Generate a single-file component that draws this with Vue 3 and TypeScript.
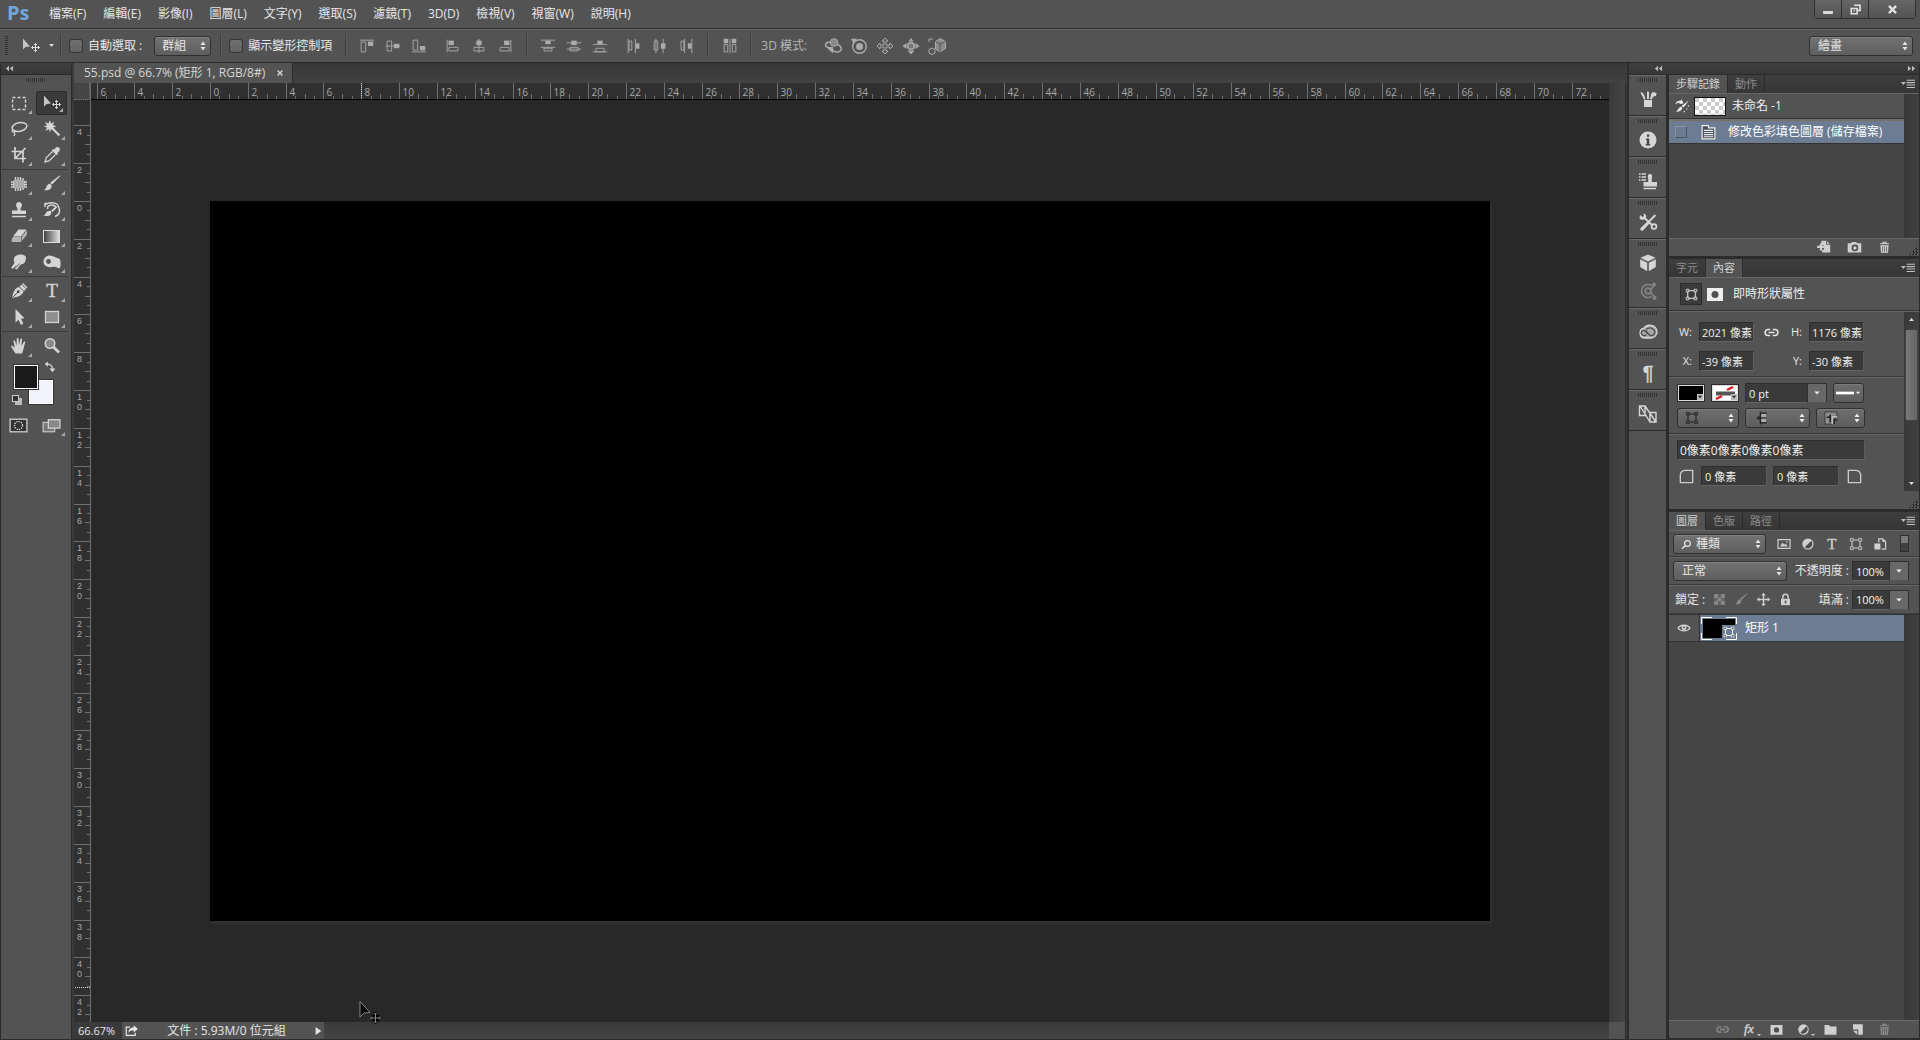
<script setup lang="ts">
import { h, ref } from 'vue'

const glyphs: Record<string, string> = {
  marquee: '<rect x="3.5" y="4.5" width="13" height="12" fill="none" stroke="currentColor" stroke-width="1.4" stroke-dasharray="3 2"/>',
  move: '<path d="M2 2.500V13.500L4.700 10.900 9 10.500z" fill="#c4c4c4"/><path d="M14.500 7.500v8M10.500 11.500h8M13 9l1.500-1.500L16 9M13 14l1.500 1.500L16 14M12 10l-1.500 1.500L12 13M17 10l1.500 1.500L17 13" fill="none" stroke="currentColor"/>',
  lasso: '<ellipse cx="10.500" cy="8" rx="7.500" ry="4.300" transform="rotate(-12 10.500 8)" fill="none" stroke="currentColor" stroke-width="1.500"/><path d="M4 10.500c-2 1.500-.500 3 1 2.500s1-2.500-1-1.500M5 13c1.500 1.500 1 3-.500 4" fill="none" stroke="currentColor" stroke-width="1.200"/>',
  wand: '<path d="M8 1l1 3.500 3.500-1.800-1.800 3.300L14.500 7.500 11 8.500l1.500 3.500-3.500-2-1 3.500-1-3.500-3.500 2 1.500-3.500-3.500-1L5 6.500 3 3l3.500 1.500z"/><path d="M10 9l7.500 7.500" stroke="currentColor" stroke-width="2.200"/>',
  crop: '<path d="M6 2v11.500h11M2.500 6.500H14V17.500M6.500 13L16.500 3" fill="none" stroke="currentColor" stroke-width="1.700"/>',
  dropper: '<path d="M17.200 2.800c1.200 1.200.8 2.700-.2 3.700l-1.600 1.500.7.800-1.600 1.500-4.800-4.800 1.500-1.600.8.800 1.500-1.600c1-1 2.500-1.500 3.700-.3z"/><path d="M10.500 6.500L4 13l-1 4 4-1 6.500-6.500" fill="none" stroke="currentColor" stroke-width="1.300"/>',
  heal: '<rect x="4" y="5.500" width="12" height="9" rx="3" fill="#aaa"/><path d="M6.500 3v3M9 3v3M11.500 3v3M14 4v2M6.500 14v3M9 14v3M11.500 14v3M14 14v2M2 8h3M2 10.500h3M2 13h3M15 8h3M15 10.500h3M15 13h3" stroke="currentColor" stroke-width="1.300"/>',
  brush: '<path d="M18.300 2L10 10.500l-1.800-1.700L17.600 1.600z"/><path d="M9.500 11.300c.700 2.200-.800 4.200-3 4.700-2 .500-3.500.300-5 .200 1.500-.500 2-1 2.500-2.400.700-2.200 2.300-4.300 4-4z"/>',
  stamp: '<path d="M10 2a3 3 0 0 1 2.300 4.900c-.800 1-.8 2-.8 3.600h5.500v3.500H3v-3.500h5.500c0-1.600 0-2.600-.8-3.600A3 3 0 0 1 10 2z"/><path d="M3 16.500h14" stroke="currentColor" stroke-width="1.500"/>',
  history: '<path d="M3 7V3.500h3M3.500 4.500C6 2.500 13 1.500 16 5M6 9c-2-3 3-5 6-3.500s1 4.500-1 3.500M16 6c3 4 1.500 9-3 10.500" fill="none" stroke="currentColor" stroke-width="1.500"/><path d="M18 4l-7.500 8L9 10.500zM8.800 11c1.500 2-.300 5-2.800 5H1.500c2-.5 2-4.500 5-5z"/>',
  eraser: '<path d="M9.500 3.500h8l-5.500 7H4z" fill="#d8d8d8"/><path d="M4 11h8v5H3.500c-1.300 0-1.300-2.500.500-5zM12.700 10.700L18 4.300v4.200l-5.300 6.700z" fill="#b5b5b5"/>',
  smudge: '<path d="M6 4.500C9 1.500 15 2 16.800 4.500c.5 2.500-.3 5.500-2 7-1.300 1-2.500.5-3.500 1.500l-3 4c-1.300 1-2.600 0-2-1.300L7.500 13l-3.300 3.500c-1 .8-2.200-.2-1.500-1.500L5.500 11C4.500 9 4.500 6 6 4.500z"/><path d="M10.500 11.500l-4 4.500" stroke="#666"/>',
  sponge: '<path d="M1.500 9C2 5.500 5 3.500 8 3.500S13.500 6 17 6.500c2 1.500 2 6.500 1 9.500-2 .5-2.500-.5-4.500-1s-4.500.5-7 0-5.500-2.500-5-6z"/><circle cx="6.500" cy="9.500" r="2.400" fill="#555"/>',
  pen: '<path d="M12.500 3.500l4.500 4.500-2 2-4.500-4.500z"/><path d="M10 6l4.500 4.500c-1 3.500-5 5.500-11.500 6.500C4 11 6 7 10 6z"/><path d="M3.500 16.500L9 11" stroke="#444" stroke-width="1"/><circle cx="9.300" cy="10.700" r="1.400" fill="#444"/><path d="M13.500 2.500l4.500 4.500" stroke="currentColor" stroke-width="1.500"/>',
  type: '<text x="10" y="16" text-anchor="middle" font-family="Liberation Serif, serif" font-size="19" stroke="currentColor" stroke-width=".4">T</text>',
  arrow: '<path d="M6.500 2v13.500l3-2.800 2.500 5.300 2.300-1.200L12 11.700l3.500-.500z"/>',
  rect: '<rect x="3.500" y="4.500" width="13" height="11" fill="#8e8e8e" stroke="currentColor" stroke-width="1.300"/>',
  hand: '<path d="M6.500 17.500L2.300 11c-.5-1.200.8-1.700 1.500-.900l2 2L4.500 5.300c-.2-1.300 1.300-1.500 1.600-.300L7.500 9.500 7.800 3c0-1.300 1.700-1.300 1.800 0l.400 6 1.300-5.700c.3-1.200 1.900-.9 1.700.3L12.400 10l2.300-4c.6-1 2-.400 1.500.700-1.300 3.300-1.700 7.800-3.200 10.800z"/>',
  zoom: '<circle cx="8" cy="7.500" r="4.700" fill="#888" stroke="currentColor" stroke-width="1.600"/><path d="M11.500 11l5.500 5.500" stroke="currentColor" stroke-width="2.800"/>',
  mask: '<rect x="2" y="4" width="16" height="12" fill="#333" stroke="currentColor" stroke-width="1.200"/><circle cx="10" cy="10" r="3.800" fill="none" stroke="#fff" stroke-width="1.200" stroke-dasharray="1 1.200"/>',
  screen: '<rect x="2" y="7" width="11" height="9" fill="#777" stroke="currentColor"/><rect x="7" y="4.500" width="11" height="8" fill="#888" stroke="currentColor" stroke-width="1.200"/>',
  swap: '<path d="M5 3.500C10 3.500 14 6 14 12" fill="none" stroke="currentColor" stroke-width="2.200"/><path d="M6.500 -1v9L1 3.500zM9 11h10L14 17z"/>',
  alignTop: '<path d="M2 3.500h16M3.500 5.500h5v11h-5z" fill="none" stroke="currentColor"/><path d="M11 5h6v5h-6z"/>',
  alignMid: '<path d="M2 10h16M3.500 4.500h5v11h-5z" fill="none" stroke="currentColor"/><path d="M11 7.500h6v5h-6z"/>',
  alignBot: '<path d="M2 16.500h16M3.500 3.500h5v11h-5z" fill="none" stroke="currentColor"/><path d="M11 10h6v5h-6z"/>',
  alignLeft: '<path d="M3.500 3v14M5.500 11.500h10v4h-10z" fill="none" stroke="currentColor"/><path d="M5 4h6v5H5z"/>',
  alignCenter: '<path d="M10 2v16M4.500 11.500h11v4h-11z" fill="none" stroke="currentColor"/><path d="M7 4h6v5H7z"/>',
  alignRight: '<path d="M16.500 3v14M4.500 11.500h10v4h-10z" fill="none" stroke="currentColor"/><path d="M9 4h6v5H9z"/>',
  distTop: '<path d="M2 3.500h16M2 11.500h16M5.500 12.500h9v3h-9z" fill="none" stroke="currentColor"/><path d="M7 4h6v4H7z"/>',
  distMid: '<path d="M2 6.500h16M2 13.500h16M5.500 11.500h9v4h-9z" fill="none" stroke="currentColor"/><path d="M7 4h6v5H7z"/>',
  distBot: '<path d="M2 8.500h16M2 16.500h16M5.500 12.500h9v4h-9z" fill="none" stroke="currentColor"/><path d="M7 4h6v4H7z"/>',
  distLeft: '<path d="M3.500 2v16M11.500 2v16M4.500 4.500h3v10h-3z" fill="none" stroke="currentColor"/><path d="M12 7h4v6h-4z"/>',
  distCenter: '<path d="M5.500 2v16M13.500 2v16M3.500 4.500h4v10h-4z" fill="none" stroke="currentColor"/><path d="M11 7h5v6h-5z"/>',
  distRight: '<path d="M8.500 2v16M16.500 2v16M4.500 4.500h3v10h-3z" fill="none" stroke="currentColor"/><path d="M12 7h4v6h-4z"/>',
  autoAlign: '<path d="M10 2v16M3.500 8.500h4v8h-4zM12.500 8.500h4v8h-4z" fill="none" stroke="currentColor"/><path d="M3 2h5v5H3zM12 2h5v5h-5z"/>',
  orbit: '<circle cx="11" cy="6.500" r="3.800" fill="#8a8a8a" stroke="currentColor"/><path d="M7 6C1.500 6.500 1 11 6 11.500M14.500 8.500c5 2 5 7 0 7.500-2 .2-3.500-.500-5-2" fill="none" stroke="currentColor" stroke-width="1.500"/><path d="M3 11l7 0 0 6.500z"/>',
  roll: '<circle cx="10.500" cy="10.500" r="6.800" fill="none" stroke="currentColor" stroke-width="1.400"/><circle cx="10.500" cy="10.500" r="3.500"/><path d="M2 3l6-.5-3.500 5z"/>',
  pan: '<path d="M10 2l3 3h-2v4h4V7l3 3-3 3v-2h-4v4h2l-3 3-3-3h2v-4H5v2l-3-3 3-3v2h4V5H7z" fill="none" stroke="currentColor"/>',
  slide: '<circle cx="10" cy="10" r="3.300" fill="#777" stroke="currentColor" stroke-width="1.600"/><path d="M10 2l2.500 3.500h-5zM10 18.500l3.500-4h-7zM1.500 10l4-3v6zM18.500 10l-4-3v6z"/>',
  scale3d: '<path d="M13 2.500l5.500 3v7L13 16l-4.500-3V5.500z" fill="#8b8b8b" stroke="currentColor"/><path d="M8.500 5.500L13 8l5.500-2.500M13 8v8" fill="none" stroke="#555"/><path d="M2 3h4M2 3v3M5 12l3 1.500V17l-3 1.500L2 17v-3.500z" fill="#555" stroke="currentColor"/>',
  brushes: '<path d="M6 11h8v7H6zM9 2.500l2 .5v7H9zM2.500 3c3 .5 4 3 5 7.500H6C5 7.500 3 6 2.500 3zM12 10c.5-2 1-3.500 1-4.500l1.500-2.500 4 1-.500 3-2.500.5-2 3z"/>',
  info: '<circle cx="10" cy="10" r="8.500"/><path d="M8.200 8.500h3V14h1v1.500H7.800V14h1V10h-.800zM9 4.500h2.300v2.300H9z" fill="#444"/>',
  clone: '<path d="M12 3a2.200 2.200 0 0 1 1.800 3.500V11H19v4.500H5.500V11h4.700V6.500A2.200 2.200 0 0 1 12 3z"/><path d="M5.500 17.500H18M1 3h1.500M3.500 3H8M1 6h1.500M3.500 6H8M1 9h1.500M3.500 9H8" stroke="currentColor" stroke-width="1.400"/>',
  tools: '<path d="M17.500 3L9.500 11M6 5.500l8.500 8" stroke="currentColor" stroke-width="1.800"/><path d="M9.500 9.500l2 2-6.500 7c-1.500 1-3.500-.5-2.500-2.500zM2 3l2.500 2 1.500-1L5.500 1.500C8 2 9 4.500 7.500 6.500S3 8 1.500 6.500z"/><circle cx="16" cy="14.500" r="2.400" fill="none" stroke="currentColor" stroke-width="1.800"/>',
  cube: '<path d="M10 1.500l7.500 3.300L10 8.500 2.500 4.800zM2.200 6.300l7 3.500v8.500l-7-4.300zM17.800 6.300l-7 3.500v8.500l7-4.300z"/>',
  share3d: '<path d="M13.500 4.500a6.500 6.500 0 1 0 0 11" fill="none" stroke="currentColor" stroke-width="1.700"/><circle cx="10" cy="10" r="2.800" fill="none" stroke="currentColor" stroke-width="1.800"/><path d="M12.500 9l3.500-5M12.500 11l4 5" fill="none" stroke="currentColor" stroke-width="1.500"/><circle cx="16" cy="3.500" r="2"/><circle cx="16.500" cy="17" r="2"/>',
  cloud: '<path d="M13.500 3.500a6.300 6.300 0 0 1 0 12.500H6.500a5 5 0 0 1-.700-9.800A7.500 7.500 0 0 1 13.500 3.500z" fill="#a8a8a8" stroke="currentColor" stroke-width="1.300"/><path d="M11.500 13L7 9c-3-2-5 2-2.500 4 1.500 1 3 .5 4-.500M8 7.500C11 5 14 5.500 16 8s0 6-3.500 5.500C10.500 13 9.500 10 7.500 8.500" fill="none" stroke="#4c4c4c" stroke-width="1.300"/>',
  para: '<text x="10" y="17" text-anchor="middle" font-family="Liberation Sans, sans-serif" font-size="20" stroke="currentColor" stroke-width=".5">¶</text>',
  comps: '<path d="M1.500 2h5.500v9.500H1.500zM12 8.500h6v9.500h-6zM2 2l10 16M7 2l11 16" fill="none" stroke="currentColor" stroke-width="1.400"/>',
  newDoc: '<path d="M9 3h5l4 4v9H9v-3h2V8H8V4zM3.500 8.500h3V6H9v2.500h2.500V11H9v2.800H6.500V11h-3z"/><path d="M14 3v4h4" stroke="#555" fill="none"/>',
  camera: '<path d="M2 5h4l1-1.500h5L13 5h5v11H2z"/><circle cx="10.500" cy="10.500" r="3" fill="none" stroke="#4a4a4a" stroke-width="1.800"/>',
  trash: '<path d="M4 5h12M8 4.500V3h4v1.500" fill="none" stroke="currentColor" stroke-width="1.500"/><path d="M4.500 7h11l-.800 10H5.300z"/><path d="M7.300 8.500v7M10 8.500v7M12.700 8.500v7" stroke="#555"/>',
  shape: '<path d="M5 5h10v10H5z" fill="none" stroke="currentColor" stroke-width="1.300"/><path d="M3 3h3.500v3.500H3zM13.500 3H17v3.500h-3.500zM3 13.500h3.500V17H3zM13.500 13.500H17V17h-3.500z" fill="#555" stroke="currentColor"/>',
  maskAdd: '<path d="M2 4h16v13H2z"/><circle cx="10" cy="10.500" r="3.500" fill="#505050"/>',
  link: '<path d="M8.500 6.500H6a3.500 3.500 0 0 0 0 7h2.500M11.500 6.500H14a3.500 3.500 0 0 1 0 7h-2.500M6.500 10h7" fill="none" stroke="currentColor" stroke-width="1.800"/>',
  cornerL: '<path d="M3.500 16.500V8Q4 4 8 3.500h8.500v13z" fill="none" stroke="currentColor" stroke-width="1.400"/>',
  cornerR: '<path d="M16.500 16.500V8Q16 4 12 3.500H3.500v13z" fill="none" stroke="currentColor" stroke-width="1.400"/>',
  capAlign: '<path d="M8 2v16M8 4h8M8 16h8M8 10h7" fill="none" stroke="#222" stroke-width="1.600"/><path d="M9 5h6v4H9zM9 11h6v4H9z" fill="#aaa"/><path d="M3 10l4-3v6z" fill="#222"/>',
  joinAlign: '<path d="M2.500 2.500h15V8h-6v9.500h-9z" fill="#8f8f8f" stroke="#333"/><path d="M11.500 8.500h6M11.500 8v9.500" stroke="#eee" stroke-width="1.300"/><path d="M4.500 9h5M9 5.500v10" stroke="#222" stroke-width="2"/><path d="M14 17.500v-5h4" stroke="#222" fill="none" stroke-width="1.600"/>',
  search: '<circle cx="11.500" cy="8.500" r="4.500" fill="none" stroke="currentColor" stroke-width="1.800"/><path d="M8 12l-5 4.500" stroke="currentColor" stroke-width="2.200"/>',
  picture: '<path d="M2.500 4.500h15v11h-15z" fill="none" stroke="currentColor" stroke-width="1.500"/><path d="M5 13l3-5 2.500 3 1.500-1.500 3 3.500z"/><circle cx="13.500" cy="7.500" r="1"/>',
  adjust: '<circle cx="10" cy="10" r="7"/><path d="M14.200 5.800A6 6 0 0 1 5.800 14.200z" fill="#4e4e4e"/>',
  smart: '<path d="M8.500 8V3.500h5L17 7v9.500h-5" fill="none" stroke="currentColor" stroke-width="1.500"/><path d="M13 3.500V7.500h4M3 9.500h7.500V17H3z"/>',
  checker: '<path d="M3 3h14v14H3z" fill="#666"/><path d="M3 3h5v5H3zM12 3h5v5h-5zM8 8h4v4H8zM3 12h5v5H3zM12 12h5v5h-5z" fill="#8a8a8a"/>',
  moveAll: '<path d="M10 1l3 3.500h-2v4.500h4.500V7L19 10l-3.500 3v-2H11v4.500h2L10 19l-3-3.500h2V11H4.500v2L1 10l3.500-3v2H9V4.500H7z"/>',
  lock: '<path d="M4 9h12v8.500H4z"/><path d="M6.500 9V6.500a3.500 3.500 0 0 1 7 0V9" fill="none" stroke="currentColor" stroke-width="2"/><path d="M10 11.500v3.500" stroke="#444" stroke-width="2"/>',
  eye: '<path d="M1.500 10C5 4.500 15 4.500 18.500 10 15 15.500 5 15.500 1.500 10z" fill="none" stroke="currentColor" stroke-width="1.700"/><circle cx="10" cy="9.500" r="3.500"/><circle cx="10" cy="9" r="1.300" fill="#444"/>',
  fx: '<text x="9" y="15" text-anchor="middle" font-family="Liberation Serif, serif" font-style="italic" font-size="18" stroke="currentColor" stroke-width=".6">fx</text>',
  folder: '<path d="M2 4h6l1.500 2H18v11H2z"/>',
  newLayer: '<path d="M4 3h13v14h-6v-7H4z"/><path d="M4 11.500h5.500V17z"/>',
  historyDoc: '<path d="M1.500 8c1-3.500 4-5 6.500-4.500L9.500 2 12 7 6.500 7.500 7.500 6C5.500 6 4 6.500 1.500 8zM18.500 3L12 12l-2.500-2zM9.500 11c2 2.500-1 6-7 6.500 2.500-1.500 3-6.500 7-6.500z"/><path d="M18 9v2M16 13v2M12 17h3" stroke="currentColor" stroke-width="1.500" stroke-dasharray="1.500 1.500"/>',
  page: '<path d="M2.500 5V2H10v2.500h7.500v13h-15z" fill="#454f5c" stroke="currentColor" stroke-width="1.400"/><path d="M4.500 7.500h11M4.500 10h11M4.500 12.500h11M4.500 15h11" stroke="currentColor" stroke-width="1.200"/>',
  export: '<path d="M8 5.500H3v11h12V13" fill="none" stroke="currentColor" stroke-width="1.600"/><path d="M6 13c0-5 3-7 7-7V3l5.500 5L13 12.500v-3c-3 0-5 .8-7 3.500z"/>',
  minimize: '<path d="M3 13h14v4H3z"/>',
  restore: '<path d="M8 3.500h9v8h-4M3.500 8.500h9v8h-9zM7 12h2" fill="none" stroke="currentColor" stroke-width="2.500"/>',
  close: '<path d="M4.500 4.500l11 11M15.500 4.500l-11 11" stroke="currentColor" stroke-width="3.500"/>',
  closeTab: '<path d="M4 4l12 12M16 4L4 16" stroke="currentColor" stroke-width="3.500"/>',
  panelMenu: '<path d="M0 7h7L3.500 11.500z"/><path d="M8 4.500h12M8 8h12M8 11.500h12M8 15h12" stroke="currentColor" stroke-width="1.500"/>',
  collapse: '<path d="M9 4v12L2 10zM18 4v12L11 10z"/>',
  expand: '<path d="M2 4v12l7-6zM11 4v12l7-6z"/>',
  updown: '<path d="M10 1l5 7H5zM10 19l5-7H5z"/>',
  down: '<path d="M3 6h14l-7 8z"/>',
  play: '<path d="M4 0l14 10-14 10z"/>',
  up: '<path d="M3 14h14l-7-8z"/>',
  line: '<path d="M0 10h20" stroke="currentColor" stroke-width="3"/>',
}

const Icon = (props: { name: string; size?: number }) =>
  h('svg', {
    viewBox: '0 0 20 20',
    width: props.size ?? 20,
    height: props.size ?? 20,
    fill: 'currentColor',
    'aria-hidden': 'true',
    innerHTML: glyphs[props.name],
  })
Icon.props = ['name', 'size']

const menus = ['檔案(F)', '編輯(E)', '影像(I)', '圖層(L)', '文字(Y)', '選取(S)', '濾鏡(T)', '3D(D)', '檢視(V)', '視窗(W)', '說明(H)']
const alignGroups = [
  [['alignTop', 'alignMid', 'alignBot'], ['alignLeft', 'alignCenter', 'alignRight']],
  [['distTop', 'distMid', 'distBot'], ['distLeft', 'distCenter', 'distRight']],
  [['autoAlign']],
]
const modes3d = ['orbit', 'roll', 'pan', 'slide', 'scale3d']
const toolGroups = [
  ['marquee', 'move', 'lasso', 'wand', 'crop', 'dropper'],
  ['heal', 'brush', 'stamp', 'history', 'eraser', 'gradient', 'smudge', 'sponge'],
  ['pen', 'type', 'arrow', 'rect'],
  ['hand', 'zoom'],
]
const dock = [['brushes'], ['info'], ['clone'], ['tools'], ['cube', 'share3d'], ['cloud'], ['para'], ['comps']]

// Ruler ticks: one labelled division covers two units.
const DIV = 37.82
const tickSet = (first: number, last: number, origin: number, lastLabel: number) => {
  const out: { pos: number; kind: number; label: string }[] = []
  for (let q = first * 4; q <= last * 4; q++) {
    const kind = q % 4 === 0 ? 0 : q % 2 === 0 ? 1 : 2
    const label = kind === 0 && q / 4 <= lastLabel ? String(Math.abs(q / 2)) : ''
    out.push({ pos: Math.round(origin + (q * DIV) / 4) + 0.5, kind, label })
  }
  return out
}
const hTicks = tickSet(-3, 37, 119, 36)
const vTicks = tickSet(-2, 21.5, 101, 21)

const autoSelect = ref(false)
const showTransform = ref(false)
const filterIcons = ['picture', 'adjust', 'type', 'shape', 'smart']
const lockIcons = ['checker', 'brush', 'moveAll', 'lock']
const layerActions = ['link', 'fx', 'maskAdd', 'adjust', 'folder', 'newLayer', 'trash']
</script>

<template>
  <div class="app">
    <header class="menubar">
      <span class="logo">Ps</span>
      <nav class="menus"><a v-for="m in menus" :key="m" href="#">{{ m }}</a></nav>
      <div class="winbtns">
        <button aria-label="最小化"><Icon name="minimize" :size="14" /></button>
        <button aria-label="還原"><Icon name="restore" :size="13" /></button>
        <button class="wide" aria-label="關閉"><Icon name="close" :size="13" /></button>
      </div>
    </header>

    <div class="options">
      <i class="vgrip"></i>
      <button class="current" aria-label="移動工具"><Icon name="move" :size="20" /><Icon name="down" :size="7" /></button>
      <i class="vsep"></i>
      <label class="check"><input v-model="autoSelect" type="checkbox" />自動選取 :</label>
      <span class="sel group"><select aria-label="自動選取"><option>群組</option></select><Icon name="updown" :size="10" /></span>
      <i class="vsep"></i>
      <label class="check transform"><input v-model="showTransform" type="checkbox" />顯示變形控制項</label>
      <template v-for="(g, gi) in alignGroups" :key="gi">
        <i class="vsep"></i>
        <div class="aligns" :class="{ single: g.length === 1 }">
          <div v-for="(s, si) in g" :key="si" class="alignset">
            <button v-for="n in s" :key="n" :aria-label="n"><Icon :name="n" :size="18" /></button>
          </div>
        </div>
      </template>
      <i class="vsep"></i>
      <span class="mode3d">3D 模式:</span>
      <div class="alignset"><button v-for="n in modes3d" :key="n" :aria-label="n"><Icon :name="n" :size="20" /></button></div>
      <span class="sel workspace"><select aria-label="工作區"><option>繪畫</option></select><Icon name="updown" :size="10" /></span>
    </div>

    <div class="body">
      <aside class="toolbox">
        <div class="strip"><Icon name="collapse" :size="9" /></div>
        <i class="hgrip"></i>
        <div v-for="(g, gi) in toolGroups" :key="gi" class="tools">
          <button v-for="t in g" :key="t" :class="{ on: t === 'move', flyout: t !== 'zoom' }" :aria-label="t">
            <span v-if="t === 'gradient'" class="gradicon"></span>
            <Icon v-else :name="t" :size="20" />
          </button>
        </div>
        <div class="swatches">
          <button class="bg" aria-label="背景色"></button>
          <button class="fg" aria-label="前景色"></button>
          <span class="swap"><Icon name="swap" :size="12" /></span>
          <span class="reset"></span>
        </div>
        <div class="tools last">
          <button aria-label="快速遮罩"><Icon name="mask" :size="21" /></button>
          <button class="flyout" aria-label="螢幕模式"><Icon name="screen" :size="21" /></button>
        </div>
      </aside>

      <main class="doc">
        <div class="tabs">
          <div class="doctab">55.psd @ 66.7% (矩形 1, RGB/8#)<button aria-label="關閉文件"><Icon name="closeTab" :size="8" /></button></div>
        </div>
        <div class="work">
          <div class="side">
            <i class="corner"></i>
            <svg class="vruler">
              <g v-for="t in vTicks" :key="t.pos">
                <line :x1="[0, 11, 13][t.kind]" x2="16" :y1="t.pos" :y2="t.pos" />
                <text v-for="(c, i) in t.label.split('')" :key="i" x="3" :y="t.pos + 9.5 + i * 10">{{ c }}</text>
              </g>
              <line class="mark" x1="1" x2="16" y1="887.5" y2="887.5" />
            </svg>
          </div>
          <div class="center">
            <svg class="hruler">
              <g v-for="t in hTicks" :key="t.pos">
                <line :y1="[0, 11, 13][t.kind]" y2="16" :x1="t.pos" :x2="t.pos" />
                <text v-if="t.label" :x="t.pos + 3" y="13">{{ t.label }}</text>
              </g>
              <line class="mark" y1="0" y2="16" x1="270.5" x2="270.5" />
            </svg>
            <div class="canvas">
              <div class="artboard"></div>
              <svg class="cursor" viewBox="0 0 24 24" width="24" height="24">
                <path d="M1 0.500V16L5 12 11 11.500z" fill="#000" stroke="#888" />
                <path d="M16.500 10.500l6 6.500-6 6.500-6-6.500z" fill="#000" />
                <path d="M16.500 12v10M11.500 17h10M15 13.500l1.500-1.500 1.500 1.500M15 20.500l1.500 1.500 1.500-1.500M13 15.500L11.500 17l1.500 1.500M20 15.500l1.500 1.500-1.500 1.500" fill="none" stroke="#8a8a8a" />
              </svg>
            </div>
          </div>
          <i class="vscroll"></i>
        </div>
        <footer class="status">
          <input class="pct" aria-label="縮放" value="66.67%" />
          <div class="info">
            <Icon name="export" :size="15" /><span>文件 : 5.93M/0 位元組</span><Icon name="play" :size="8" />
          </div>
          <i class="hscroll"></i>
          <i class="box"></i>
        </footer>
      </main>

      <aside class="right">
        <div class="strip"><Icon name="collapse" :size="9" /><Icon name="expand" :size="9" /></div>
        <div class="cols">
          <nav class="dock">
            <div v-for="(d, i) in dock" :key="i" class="cell">
              <i class="hgrip"></i>
              <button v-for="n in d" :key="n" :class="{ dim: n === 'share3d' }" :aria-label="n"><Icon :name="n" :size="20" /></button>
            </div>
          </nav>
          <div class="panels">
            <section class="panel history">
              <div class="ptabs"><button class="on">步驟記錄</button><button>動作</button><span class="pmenu"><Icon name="panelMenu" :size="14" /></span></div>
              <div class="withbar">
                <div class="list">
                  <div class="snap"><Icon name="historyDoc" :size="16" /><span class="thumb"></span><span>未命名 -1</span></div>
                  <div class="step"><span class="slot"></span><Icon name="page" :size="17" /><span>修改色彩填色圖層 (儲存檔案)</span></div>
                </div>
                <i class="bar"></i>
              </div>
              <div class="pfoot hist">
                <button aria-label="新文件"><Icon name="newDoc" :size="18" /></button>
                <button aria-label="快照"><Icon name="camera" :size="17" /></button>
                <button aria-label="刪除"><Icon name="trash" :size="15" /></button>
                <i class="resize"></i>
              </div>
            </section>

            <section class="panel props">
              <div class="ptabs"><button>字元</button><button class="on">內容</button><span class="pmenu"><Icon name="panelMenu" :size="14" /></span></div>
              <div class="phead">
                <span class="shapebtn"><Icon name="shape" :size="15" /></span><Icon name="maskAdd" :size="20" /><span>即時形狀屬性</span>
              </div>
              <div class="withbar">
                <div class="fields">
                  <div class="dims">
                    <label for="w">W:</label><input id="w" value="2021 像素" />
                    <Icon name="link" :size="17" />
                    <label for="h">H:</label><input id="h" value="1176 像素" />
                    <label for="x">X:</label><input id="x" value="-39 像素" />
                    <span></span>
                    <label for="y">Y:</label><input id="y" value="-30 像素" />
                  </div>
                  <div class="strokes">
                    <div class="row">
                      <button class="chip fill" aria-label="填色"><Icon name="down" :size="6" /></button>
                      <button class="chip none" aria-label="筆畫"><svg width="20" height="14" viewBox="0 0 20 14" aria-hidden="true"><path d="M1 7.500h19" stroke="#555" stroke-width="4" /><path d="M1 13l6-3M12 4l6-3" stroke="#d22" stroke-width="2.500" /></svg><Icon name="down" :size="6" /></button>
                      <span class="combo pt"><input aria-label="筆畫寬度" value="0 pt" /><button aria-label="寬度選單"><Icon name="down" :size="8" /></button></span>
                      <button class="drop linebtn" aria-label="筆畫樣式"><Icon name="line" :size="18" /><Icon name="down" :size="6" /></button>
                    </div>
                    <div class="row">
                      <button class="drop d1" aria-label="對齊"><Icon name="shape" :size="16" /><Icon name="updown" :size="10" /></button>
                      <button class="drop d2" aria-label="端點"><Icon name="capAlign" :size="16" /><Icon name="updown" :size="10" /></button>
                      <button class="drop d3" aria-label="轉角"><Icon name="joinAlign" :size="16" /><Icon name="updown" :size="10" /></button>
                    </div>
                  </div>
                  <div class="radii">
                    <input class="all" aria-label="圓角半徑" value="0像素0像素0像素0像素" />
                    <div class="row">
                      <Icon name="cornerL" :size="19" /><input aria-label="左上角" value="0 像素" /><input aria-label="右上角" value="0 像素" /><Icon name="cornerR" :size="19" />
                    </div>
                  </div>
                </div>
                <div class="bar scroll"><Icon name="up" :size="7" /><i class="thumbbar"></i><Icon name="down" :size="7" /></div>
              </div>
              <div class="pfoot"><i class="resize"></i></div>
            </section>

            <section class="panel layers">
              <div class="ptabs"><button class="on">圖層</button><button>色版</button><button>路徑</button><span class="pmenu"><Icon name="panelMenu" :size="14" /></span></div>
              <div class="lrow filter">
                <span class="sel kind"><span class="lens"><Icon name="search" :size="13" /></span><select aria-label="篩選"><option>種類</option></select><Icon name="updown" :size="10" /></span>
                <div class="ficons"><button v-for="n in filterIcons" :key="n" :aria-label="n"><Icon :name="n" :size="16" /></button></div>
                <i class="toggle"></i>
              </div>
              <div class="lrow">
                <span class="sel blend"><select aria-label="混合模式"><option>正常</option></select><Icon name="updown" :size="10" /></span>
                <label class="push" for="op">不透明度 :</label>
                <span class="combo"><input id="op" value="100%" /><button aria-label="不透明度選單"><Icon name="down" :size="8" /></button></span>
              </div>
              <div class="lrow locks">
                <span>鎖定 :</span>
                <div class="licons"><button v-for="n in lockIcons" :key="n" :class="n" :aria-label="n"><Icon :name="n" :size="15" /></button></div>
                <label class="push" for="fl">填滿 :</label>
                <span class="combo"><input id="fl" value="100%" /><button aria-label="填滿選單"><Icon name="down" :size="8" /></button></span>
              </div>
              <div class="withbar">
                <div class="list">
                  <div class="layer">
                    <button class="vis" aria-label="可見度"><Icon name="eye" :size="14" /></button>
                    <div class="lbody">
                      <span class="lthumb">
                        <svg viewBox="0 0 36 23" width="36" height="23" aria-hidden="true">
                          <path d="M2 2h32v19H2z" fill="#000" />
                          <path d="M.5 7V.5H11M25 .5h10.500V7M.5 16v6.500H11M25 22.500h10.500V16" fill="none" stroke="#fff" />
                        </svg>
                        <b><Icon name="shape" :size="14" /></b>
                      </span>
                      <span>矩形 1</span>
                    </div>
                  </div>
                </div>
                <i class="bar"></i>
              </div>
              <div class="pfoot lay">
                <button v-for="n in layerActions" :key="n" :class="n" :aria-label="n"><Icon :name="n" :size="15" /></button>
              </div>
            </section>
          </div>
        </div>
      </aside>
    </div>
  </div>
</template>

<style>
html, body { margin: 0; background: #282828; }
</style>

<style scoped>
* { box-sizing: border-box; }
svg { display: block; flex: none; }
i { display: block; flex: none; }
.app {
  height: 100vh; min-height: 700px; display: flex; flex-direction: column; overflow: hidden;
  background: #535353; color: #e6e6e6;
  font: 12px/16px "Open Sans", "Noto Sans CJK TC", sans-serif;
}
button, input, select { font: inherit; color: inherit; margin: 0; padding: 0; border: 0; background: none; border-radius: 0; }
button { display: flex; align-items: center; justify-content: center; flex: none; }
input { min-width: 0; outline: none; }
label, span { white-space: nowrap; }

.menubar { display: flex; height: 28px; flex: none; align-items: flex-start; padding-left: 7px; }
.logo { width: 42px; color: #74a5da; font: bold 20px/26px "Open Sans", sans-serif; }
.menus { display: flex; gap: 17px; line-height: 27px; }
.menus a { color: inherit; text-decoration: none; white-space: nowrap; }
.winbtns { display: flex; margin: 0 4px 0 auto; height: 19px; border: 1px solid #303030; border-top: 0; border-radius: 0 0 4px 4px; }
.winbtns button { width: 27px; border-right: 1px solid #303030; color: #e2e2e2; background: linear-gradient(#666, #545454); }
.winbtns .wide { width: 46px; border-right: 0; }

.options { display: flex; flex: none; align-items: center; height: 35px; border-top: 1px solid #2b2b2b; border-bottom: 1px solid #2b2b2b; box-shadow: inset 0 1px #676767; padding: 0 7px 0 5px; }
.vgrip { width: 3px; height: 20px; background: repeating-linear-gradient(#333 0 1px, transparent 1px 2px); }
.current { gap: 7px; margin: 0 5px 0 13px; color: #dcdcdc; }
.vsep { width: 2px; height: 23px; background: #3f3f3f; border-right: 1px solid #5c5c5c; }
.check { display: flex; align-items: center; gap: 5px; margin-left: 7px; }
.check input { appearance: none; width: 14px; height: 14px; border: 1px solid #343434; border-radius: 3px; background: linear-gradient(#707070, #626262); }
.transform { margin-right: 13px; }
.sel { position: relative; display: flex; height: 20px; flex: none; border: 1px solid #303030; border-radius: 3px; background: linear-gradient(#727272, #5e5e5e); box-shadow: inset 0 1px #838383; }
.sel select { appearance: none; flex: 1; width: 100%; padding: 0 16px 0 8px; line-height: 16px; outline: none; }
.sel > svg { position: absolute; right: 2px; top: 4px; color: #e4e4e4; pointer-events: none; }
.group { width: 57px; margin: 0 9px 0 12px; }
.group select { padding-left: 7px; }
.workspace { width: 104px; margin-left: auto; }
.aligns { display: flex; gap: 8px; padding: 0 8px 0 7px; }
.alignset { display: flex; color: #ababab; }
.alignset button { width: 26px; height: 20px; }
.single { padding: 0 7px 0 8px; }
.mode3d { margin: 0 13px 0 9px; color: #b4b4b4; }

.body { flex: 1; min-height: 0; display: flex; padding: 0 1px 1px; background: #2b2b2b; }
.strip { flex: none; height: 12px; display: flex; align-items: center; background: linear-gradient(#404040, #373737); color: #bdbdbd; border-bottom: 1px solid #2b2b2b; }
.toolbox { width: 71px; flex: none; display: flex; flex-direction: column; background: #535353; border-right: 1px solid #2b2b2b; }
.toolbox .strip { padding-left: 4px; }
.hgrip { width: 19px; height: 4px; background: repeating-linear-gradient(90deg, #343434 0 1px, transparent 1px 2px); }
.toolbox .hgrip { margin: 3px 0 7px 25px; }
.tools { display: grid; grid-template-columns: 33px 33px; grid-auto-rows: 26px; margin: 0 3px 0 1px; padding: 1px 0; color: #d4d4d4; }
.tools + .tools { border-top: 1px solid #3c3c3c; }
.tools button { position: relative; }
.tools .flyout::after { content: ""; position: absolute; right: 3px; bottom: 2px; border: 2px solid; border-color: transparent #aaa #aaa transparent; }
.tools .on { width: 31px; height: 24px; margin: 1px; background: #3a3a3a; border: 1px solid #2c2c2c; border-radius: 2px; }
.gradicon { width: 17px; height: 13px; border: 1px solid #ddd; background: linear-gradient(90deg, #444, #ddd); }
.swatches { position: relative; height: 48px; margin: 4px 0 0; }
.swatches .fg, .swatches .bg { position: absolute; width: 26px; height: 26px; border: 1px solid #333; box-shadow: inset 0 0 0 1px #fff; }
.fg { left: 12px; top: 0; background: #1a1a1a; }
.swatches .bg { left: 27px; top: 15px; background: #f2f2f9; }
.swap { position: absolute; left: 43px; top: -2px; color: #d4d4d4; }
.reset { position: absolute; left: 11px; top: 31px; width: 7px; height: 7px; border: 1px solid #ccc; background: #333; box-shadow: 3px 3px #bbb; }
.tools.last { border: 0; padding: 0; }

.doc { flex: 1; min-width: 0; display: flex; flex-direction: column; padding-left: 2px; background: #3a3a3a; }
.tabs { height: 20px; flex: none; display: flex; background: linear-gradient(#383838, #424242); }
.doctab { display: flex; align-items: center; padding: 0 8px 0 10px; gap: 11px; background: #535353; border-right: 1px solid #2b2b2b; color: #d6d6d6; white-space: nowrap; }
.work { flex: 1; min-height: 0; display: flex; background: #282828; }
.side { width: 17px; flex: none; display: flex; flex-direction: column; background: #303030; border-right: 1px solid #6e6e6e; }
.corner { height: 17px; background: #454545; border-right: 1px dotted #777; border-bottom: 1px dotted #777; }
.side svg { width: 16px; flex: 1; min-height: 0; }
.center { flex: 1; min-width: 0; display: flex; flex-direction: column; }
.hruler { width: 100%; height: 17px; background: #303030; border-bottom: 1px solid #000; }
.vruler, .hruler { font-size: 10px; fill: #a8a8a8; overflow: hidden; }
.vruler { font: 9px "Liberation Sans", sans-serif; }
.vruler line, .hruler line { stroke: #707070; }
.vruler .mark, .hruler .mark { stroke: #d0d0d0; stroke-dasharray: 1 1; }
.canvas { position: relative; flex: 1; min-height: 0; display: flex; align-items: center; justify-content: center; padding-right: 1px; }
.artboard { width: 1280px; flex: none; aspect-ratio: 16 / 9; background: #000; box-shadow: 2px 3px 3px #333; }
.cursor { position: absolute; left: 268px; bottom: -3px; z-index: 2; }
.vscroll { width: 17px; background: linear-gradient(90deg, #3a3a3a, #454545); border-right: 1px solid #2b2b2b; }
.status { height: 17px; flex: none; display: flex; }
.pct { width: 48px; padding-left: 4px; font-size: 11px; }
.info { width: 202px; display: flex; align-items: center; justify-content: space-between; padding: 0 2px; background: #535353; }
.hscroll { flex: 1; background: linear-gradient(#3a3a3a, #454545); }
.box { width: 17px; background: #535353; border-right: 1px solid #2b2b2b; }

.right { width: 293px; flex: none; display: flex; flex-direction: column; padding-left: 2px; background: #2b2b2b; border-left: 1px solid #3e3e3e; }
.right .strip { padding: 0 3px 0 25px; justify-content: space-between; }
.cols { flex: 1; min-height: 0; display: flex; gap: 3px; }
.dock { width: 37px; flex: none; background: #535353; color: #d6d6d6; }
.cell { display: flex; flex-direction: column; align-items: center; border-top: 1px solid #6a6a6a; border-bottom: 1px solid #2b2b2b; padding: 2px 0 3px; }
.cell .hgrip { margin-bottom: 3px; }
.cell button { height: 27px; width: 30px; }
.cell button + button { margin-top: 1px; }
.dim { color: #868686; }
.panels { flex: 1; min-width: 0; display: flex; flex-direction: column; gap: 2px; }
.panel { display: flex; flex-direction: column; background: #535353; border-bottom: 1px solid #2b2b2b; }
.ptabs { display: flex; height: 18px; flex: none; background: linear-gradient(#3e3e3e, #363636); }
.ptabs button { height: 17px; padding: 0 7px; color: #8c8c8c; border-right: 1px solid #2b2b2b; font-size: 11px; white-space: nowrap; }
.ptabs .on { height: 18px; background: #535353; color: #d2d2d2; }
.pmenu { margin: 2px 4px 0 auto; color: #c0c0c0; }
.withbar { display: flex; flex: 1; min-height: 0; border-top: 1px solid #666; }
.list { flex: 1; min-width: 0; background: #454545; }
.bar { width: 15px; background: linear-gradient(90deg, #383838, #404040); }
.history { height: 182px; flex: none; }
.snap { display: flex; align-items: center; height: 25px; padding-left: 5px; background: #535353; border-bottom: 1px solid #333; color: #f0f0f0; }
.thumb { width: 32px; height: 19px; margin: 0 6px 0 4px; border: 1px solid #111; background: repeating-conic-gradient(#fff 0 25%, #ccc 0 50%) 0 0 / 8px 8px; }
.step { display: flex; align-items: center; height: 25px; padding-left: 6px; background: #6b7c93; border-top: 2px solid #77716a; border-bottom: 1px solid #333; color: #fff; }
.slot { width: 12px; height: 12px; margin-right: 13px; border: 1px solid; border-color: #8393a9 #4b5869 #4b5869 #8393a9; }
.step svg { margin-right: 11px; color: #eee; }
.pfoot { position: relative; height: 18px; flex: none; display: flex; align-items: center; color: #cfcfcf; }
.hist { justify-content: flex-end; padding-right: 27px; gap: 14px; box-shadow: inset 0 1px #666; }
.resize { position: absolute; right: 1px; bottom: 1px; width: 9px; height: 9px; clip-path: polygon(100% 0, 100% 100%, 0 100%); background: repeating-conic-gradient(#2b2b2b 0 25%, #606060 0 50%) 0 0 / 3px 3px; }

.props { height: 251px; flex: none; }
.props input { height: 20px; padding-left: 3px; background: #3a3a3a; border: 1px solid #2e2e2e; border-bottom-color: #636363; border-right-color: #5c5c5c; color: #f0f0f0; font-size: 11px; }
.props .dims input { padding-left: 2px; }
.phead { display: flex; align-items: center; height: 34px; padding-left: 11px; border-top: 1px solid #666; border-bottom: 1px solid #333; color: #eee; }
.shapebtn { display: flex; align-items: center; justify-content: center; width: 22px; height: 22px; margin-right: 3px; background: #3b3b3b; border: 1px solid #2c2c2c; }
.phead span:last-child { margin-left: 8px; }
.fields { flex: 1; min-width: 0; }
.dims { display: grid; grid-template-columns: 22px 55px 34px 21px 55px; row-gap: 9px; height: 65px; padding: 10px 0 0 8px; border-bottom: 1px solid #383838; align-content: start; align-items: center; }
.dims label { display: flex; justify-content: flex-end; padding-right: 7px; font-size: 11px; }
.dims svg { justify-self: center; }
.strokes { height: 57px; padding: 5px 0 0 8px; border-top: 1px solid #666; border-bottom: 1px solid #383838; }
.row { display: flex; align-items: center; gap: 6px; height: 20px; }
.strokes .row + .row { margin-top: 5px; }
.chip { position: relative; width: 28px; height: 18px; border: 1px solid #2b2b2b; box-shadow: inset 0 0 0 1px #ddd; background: #000; }
.chip > svg:last-child { position: absolute; right: 1px; bottom: 1px; background: #bbb; color: #222; }
.none { background: #fff; }
.combo { display: flex; height: 20px; flex: none; }
.combo input { width: 37px; height: 20px; padding-left: 3px; font-size: 11px; background: #3a3a3a; border: 1px solid #2e2e2e; border-right: 0; border-bottom-color: #636363; color: #f4f4f4; }
.combo button { width: 20px; background: #686868; border: 1px solid #303030; border-bottom-color: #555; color: #eee; }
.pt input { width: 62px; }
.drop { height: 20px; justify-content: space-between; border: 1px solid #303030; border-radius: 3px; background: linear-gradient(#6e6e6e, #5d5d5d); box-shadow: inset 0 1px #7d7d7d; padding: 0 2px 0 6px; color: #eee; }
.drop svg:first-child { color: #222; }
.d1 { width: 62px; }
.d2 { width: 65px; padding-left: 8px; }
.d3 { width: 49px; }
.linebtn { width: 31px; padding: 0 2px; }
.linebtn svg:first-child { color: #fff; }
.radii { padding: 5px 0 0 8px; border-top: 1px solid #666; }
.props .all { width: 188px; font-size: 12px; padding-left: 2px; display: block; }
.radii .row { margin-top: 6px; }
.radii .row input { width: 66px; }
.radii .row svg { color: #ccc; }
.radii .row svg:first-child { margin-right: -1px; }
.scroll { display: flex; flex-direction: column; align-items: center; padding: 4px 0; flex: none; color: #ddd; }
.thumbbar { width: 13px; height: 92px; margin: 6px 0 auto; border: 1px solid #444; border-radius: 2px; background: linear-gradient(90deg, #787878, #666); }

.layers { flex: 1; min-height: 0; }
.lrow { display: flex; align-items: center; height: 28px; flex: none; padding: 0 10px 0 4px; border-top: 1px solid #666; border-bottom: 1px solid #3c3c3c; }
.locks { height: 29px; padding-left: 6px; }
.filter { height: 27px; }
.kind { width: 93px; }
.kind select { padding-left: 22px; }
.lens { position: absolute; left: 6px; top: 3px; }
.blend { width: 114px; }
.push { margin: 0 3px 0 auto; }
.ficons { display: flex; margin-left: 6px; color: #d0d0d0; }
.ficons button { width: 24px; }
.toggle { width: 9px; height: 17px; margin-left: auto; border: 1px solid #303030; background: linear-gradient(#7a7a7a 50%, #404040 50%); }
.licons { display: flex; margin-left: 3px; }
.licons button { width: 22px; color: #cfcfcf; }
.licons .brush { color: #8a8a8a; }
.layers .withbar { border-top-color: #333; }
.layer { display: flex; height: 27px; background: #6b7c93; border-bottom: 1px solid #333; }
.vis { width: 31px; background: #535353; border-right: 1px solid #333; color: #d4d4d4; }
.lbody { display: flex; align-items: center; gap: 8px; padding-left: 1px; color: #fff; }
.lthumb { position: relative; }
.lthumb b { position: absolute; right: 1px; bottom: 1px; background: #6b7c93; }
.lay { justify-content: flex-end; padding-right: 27px; gap: 12px; box-shadow: inset 0 1px #6a6a6a; }
.lay button { position: relative; }
.lay .link, .lay .trash { color: #8c8c8c; }
.lay .fx::after, .lay .adjust::after { content: ""; position: absolute; right: -4px; bottom: -1px; border: 2px solid transparent; border-top-color: #ccc; }
</style>
